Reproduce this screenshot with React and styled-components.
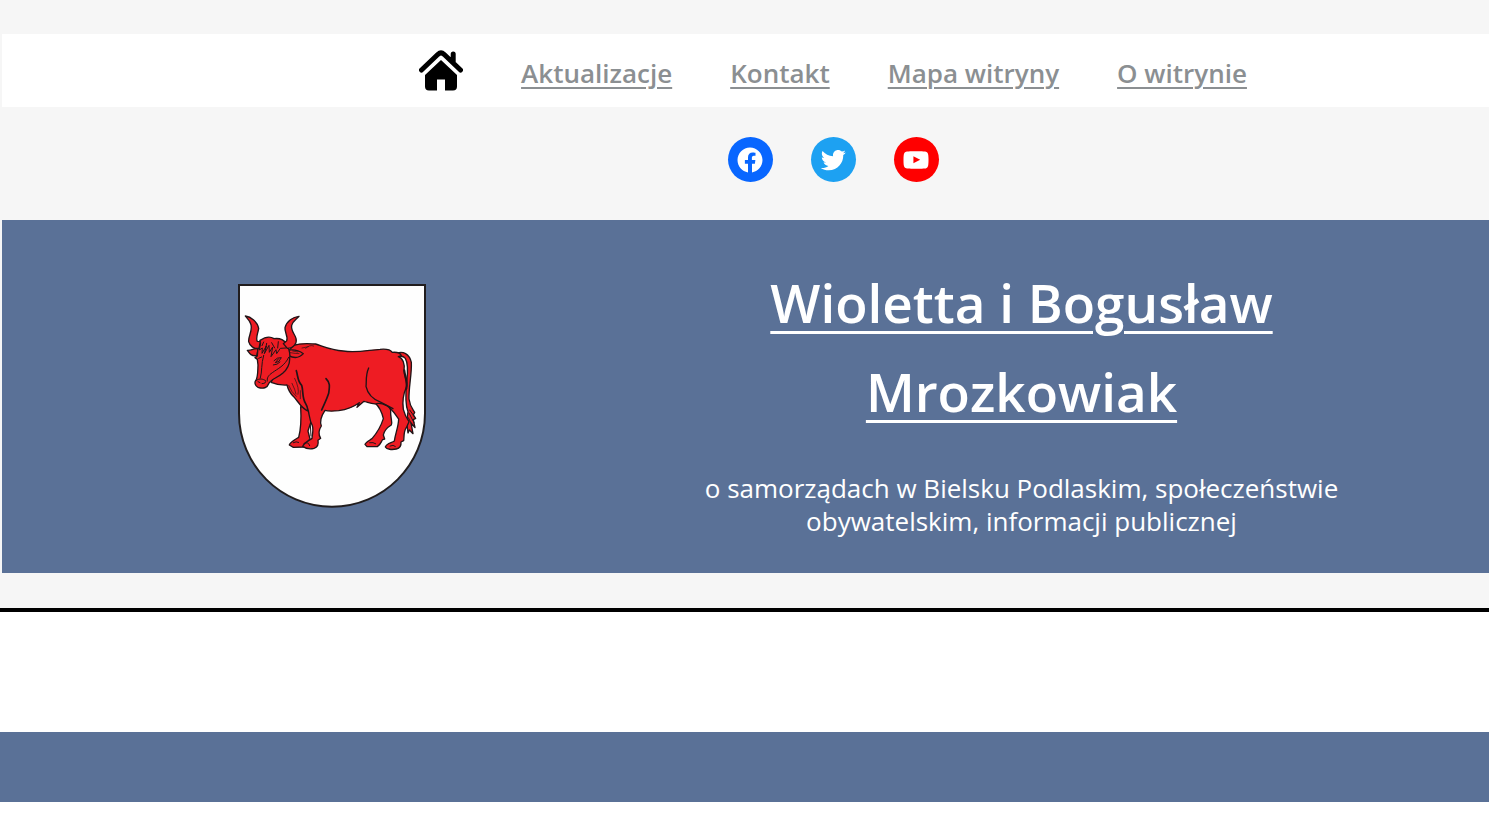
import React from "react";
import styled, { createGlobalStyle } from "styled-components";

const GlobalStyle = createGlobalStyle`
  * { box-sizing: border-box; }
  body {
    margin: 0;
    background: #fff;
    font-family: "Segoe UI", "Open Sans", "Noto Sans", sans-serif;
  }
`;

const Header = styled.header`
  display: flex;
  flex-direction: column;
  padding: 34px 0 35px 2px;
  background: #f6f6f6;
  border-bottom: 4px solid #000;
`;

const Nav = styled.nav`
  display: flex;
  justify-content: center;
  align-items: center;
  gap: 58px;
  min-height: 73px;
  padding-left: 175px;
  background: #fff;
`;

const HomeLink = styled.a`
  display: block;
  width: 44px;
  height: 42px;
  color: #000;
`;

const NavLink = styled.a`
  color: #8b8f92;
  font-size: 26px;
  font-weight: 600;
  line-height: 36px;
  white-space: nowrap;
  text-decoration: underline;
  text-decoration-thickness: 2px;
  text-underline-offset: 4px;
  padding-top: 4px;
`;

const SocialList = styled.ul`
  display: flex;
  justify-content: center;
  gap: 38px;
  margin: 0;
  padding: 30px 0 38px 175px;
  list-style: none;
`;

const SocialLink = styled.a`
  display: flex;
  align-items: center;
  justify-content: center;
  width: 45px;
  height: 45px;
  border-radius: 50%;
  background: ${(p) => p.$color};
  color: #fff;
`;

const Hero = styled.section`
  display: grid;
  grid-template-columns: 660fr 719fr 108fr;
  align-items: center;
  min-height: 353px;
  padding: 32px 0 33px;
  background: #5a7197;
  color: #fff;
`;

const Crest = styled.svg`
  display: block;
  justify-self: center;
  width: 188px;
  height: 224px;
`;

const HeroText = styled.div`
  padding-top: 4px;
  text-align: center;
`;

const Title = styled.h1`
  margin: 0;
  padding: 0 80px;
  font-size: 53px;
  font-weight: 600;
  line-height: 89px;
`;

const TitleLink = styled.a`
  color: inherit;
  text-decoration: underline;
  text-decoration-thickness: 3px;
  text-underline-offset: 8px;
`;

const Tagline = styled.p`
  margin: 36px 0 0;
  padding: 0 32px;
  font-size: 26px;
  line-height: 33px;
`;

const Footer = styled.footer`
  min-height: 70px;
  margin-top: 120px;
  background: #5a7197;
`;

const links = ["Aktualizacje", "Kontakt", "Mapa witryny", "O witrynie"];

const socials = [
  {
    name: "Facebook",
    color: "#0866ff",
    path: "M12 2C6.5 2 2 6.5 2 12c0 5 3.7 9.1 8.4 9.9v-7H7.9V12h2.5V9.8c0-2.5 1.5-3.9 3.8-3.9 1.1 0 2.2.2 2.2.2v2.5h-1.3c-1.2 0-1.6.8-1.6 1.6V12h2.8l-.4 2.9h-2.3v7C18.3 21.1 22 17 22 12c0-5.5-4.5-10-10-10z",
  },
  {
    name: "Twitter",
    color: "#1da1f2",
    path: "M22.23,5.924c-0.736,0.326-1.527,0.547-2.357,0.646c0.847-0.508,1.498-1.312,1.804-2.27c-0.793,0.47-1.671,0.812-2.606,0.996C18.324,4.498,17.257,4,16.077,4c-2.266,0-4.103,1.837-4.103,4.103c0,0.322,0.036,0.635,0.106,0.935C8.67,8.867,5.647,7.234,3.623,4.751C3.27,5.357,3.067,6.062,3.067,6.814c0,1.424,0.724,2.679,1.825,3.415c-0.673-0.021-1.305-0.206-1.859-0.513c0,0.017,0,0.034,0,0.052c0,1.988,1.414,3.647,3.292,4.023c-0.344,0.094-0.707,0.144-1.081,0.144c-0.264,0-0.521-0.026-0.772-0.074c0.522,1.63,2.038,2.816,3.833,2.85c-1.404,1.1-3.174,1.756-5.096,1.756c-0.331,0-0.658-0.019-0.979-0.057c1.816,1.164,3.973,1.843,6.29,1.843c7.547,0,11.675-6.252,11.675-11.675c0-0.178-0.004-0.355-0.012-0.531C20.985,7.47,21.68,6.747,22.23,5.924z",
  },
  {
    name: "YouTube",
    color: "#ff0000",
    path: "M21.8,8.001c0,0-0.195-1.378-0.795-1.985c-0.76-0.797-1.613-0.801-2.004-0.847c-2.799-0.202-6.997-0.202-6.997-0.202h-0.009c0,0-4.198,0-6.997,0.202C4.608,5.216,3.756,5.22,2.995,6.016C2.395,6.623,2.2,8.001,2.2,8.001S2,9.62,2,11.238v1.517c0,1.618,0.2,3.237,0.2,3.237s0.195,1.378,0.795,1.985c0.761,0.797,1.76,0.771,2.205,0.855c1.6,0.153,6.8,0.201,6.8,0.201s4.203-0.006,7.001-0.209c0.391-0.047,1.243-0.051,2.004-0.847c0.6-0.607,0.795-1.985,0.795-1.985s0.2-1.618,0.2-3.237v-1.517C22,9.62,21.8,8.001,21.8,8.001z M9.935,14.594l-0.001-5.62l5.404,2.82L9.935,14.594z",
  },
];

function HomeIcon() {
  return (
    <svg width="44" height="42" viewBox="0 0 44 42" aria-hidden="true">
      <path
        d="M2.5 20 19 4.300Q22 1.600 25 4.300L41.500 20M34.200 12V4"
        fill="none"
        stroke="currentColor"
        strokeWidth="5"
        strokeLinecap="round"
        strokeLinejoin="round"
      />
      <path d="M22 10 38 25V36.500a4 4 0 0 1-4 4H26V29.500H18v11h-8a4 4 0 0 1-4-4V25z" fill="currentColor" />
    </svg>
  );
}

function CoatOfArms() {
  return (
    <Crest viewBox="24 27 564 672" role="img" aria-label="Herb Bielska Podlaskiego">
      <path d="M27 30H585V415C585 570 460 695 306 695S27 570 27 415Z" fill="#fefefe" stroke="#211d1e" strokeWidth="6" />
      <g fill="#ee1c23" stroke="#211417" strokeWidth="4" strokeLinejoin="round" strokeLinecap="round">
        {/* tail */}
        <path d="M502 234C518 228 538 236 544 262C546 295 536 335 537 372C540 395 548 402 554 412L550 420L557 430L550 434L555 458L543 444L549 476L538 465L534 474L530 440L534 410C526 390 527 350 530 320C534 290 533 262 526 250C519 242 510 243 502 246Z" />
        {/* far legs */}
        <path d="M212 395C214 430 212 465 206 487C196 493 180 502 178 510L190 517L222 516L240 492L234 468L243 440L246 402Z" />
        <path d="M435 384C450 397 456 413 460 431C452 457 439 476 426 491C417 497 408 501 405 508L411 515L442 515C453 508 453 500 458 494L464 492L460 480C463 464 474 456 484 450C489 442 480 430 482 405L470 382Z" />
        {/* body with near legs */}
        <path d="M190 211C215 203 235 206 257 207C282 215 305 226 340 228C382 234 416 225 450 223C470 221 482 225 487 232C501 231 512 235 514 242L505 245C519 250 525 267 522 286C523 307 532 321 529 337C520 357 517 382 520 403C524 419 530 430 537 440L529 458C520 470 523 486 521 497L513 501C514 513 509 520 499 522C485 525 470 523 466 516C470 504 485 504 493 498C496 476 505 457 506 432C492 413 482 397 470 392C458 386 448 384 440 386C425 389 413 381 402 379L381 397L388 383C363 401 345 404 326 407C308 409 294 409 285 406C277 418 268 437 274 453C266 465 265 479 272 490L264 496C266 507 262 517 252 520C240 523 225 519 218 514C223 503 236 497 246 490C247 478 251 464 247 452C238 435 238 419 235 408C215 402 205 380 191 365C179 354 174 342 171 330C150 331 135 327 123 322L170 235Z" />
        {/* head and ears */}
        <path d="M176 225C193 223 207 226 220 236C208 249 191 250 176 242Z" />
        <path d="M85 220C72 219 65 227 52 226C59 236 64 244 80 242Z" />
        <path d="M90 196C108 184 123 185 132 191C147 189 160 193 168 204C176 219 182 232 179 249C180 270 170 284 158 295C143 308 120 314 116 326C112 338 100 343 84 337C75 333 73 322 77 317C84 309 83 292 84 270L82 253L75 248L82 243L84 215Z" />
        {/* horns */}
        <path d="M46 123C63 125 82 140 86 160C84 175 76 190 82 199L91 200L87 220C71 223 59 212 56 200C54 184 70 165 62 146C58 134 50 130 46 123Z" />
        <path d="M207 124C189 126 170 138 165 158C163 173 176 186 170 197L160 206L172 220C191 220 202 204 198 190C194 176 182 167 185 151C188 139 198 134 207 124Z" />
      </g>
      <g fill="none" stroke="#211417" strokeWidth="4" strokeLinecap="round" strokeLinejoin="round">
        {/* forelock and face */}
        <path d="M92 204L88 225L97 219L96 235L109 213L103 236L117 211L118 232L128 216L123 245L138 224L140 236L151 220L168 219M101 201L96 212M125 203L134 219M145 200L143 219M110 205L106 225" strokeWidth="3" />
        <path d="M132 257Q142 246 154 248Q148 263 136 263L145 252M130 270Q142 270 150 261M176 247C165 272 142 282 127 293C115 301 110 309 112 318M101 241C93 268 97 289 91 309M86 250L95 246M77 317C91 308 98 313 106 316Q111 325 96 326M84 320L90 323" strokeWidth="3" />
        <path d="M181 233Q197 236 207 236M188 228L203 231" strokeWidth="2" />
        {/* neck and shoulder */}
        <path d="M199 287C205 307 202 318 215 331C221 350 215 366 227 386Q232 394 234 406" strokeWidth="5" />
        <path d="M288 311C301 324 299 333 296 355C290 374 282 389 275 405" strokeWidth="5" />
        <path d="M176 331Q184 352 199 364M186 325Q196 345 198 357M194 310Q209 341 204 358M211 347L211 371M227 220Q239 208 251 213M216 219L235 215" strokeWidth="2" />
        {/* hind quarter */}
        <path d="M416 279C406 301 410 320 408 334C413 358 426 372 453 382L489 401" />
        <path d="M523 286C525 307 535 320 529 341" strokeWidth="6" />
        {/* hooves */}
        <path d="M190 503Q199 498 206 502M222 505Q236 499 239 512M419 503Q430 501 437 506M480 513Q490 508 496 514M241 449L243 483M537 414L552 443M539 405L552 423M535 428L547 452" strokeWidth="3" />
      </g>
    </Crest>
  );
}

export default function App() {
  return (
    <>
      <GlobalStyle />
      <Header>
        <Nav aria-label="Menu">
          <HomeLink href="#" aria-label="Strona główna">
            <HomeIcon />
          </HomeLink>
          {links.map((label) => (
            <NavLink key={label} href="#">{label}</NavLink>
          ))}
        </Nav>
        <SocialList>
          {socials.map((s) => (
            <li key={s.name}>
              <SocialLink href="#" $color={s.color} aria-label={s.name}>
                <svg width="30" height="30" viewBox="0 0 24 24" fill="currentColor" aria-hidden="true">
                  <path d={s.path} />
                </svg>
              </SocialLink>
            </li>
          ))}
        </SocialList>
        <Hero>
          <CoatOfArms />
          <HeroText>
            <Title>
              <TitleLink href="#">Wioletta i Bogusław Mrozkowiak</TitleLink>
            </Title>
            <Tagline>o samorządach w Bielsku Podlaskim, społeczeństwie obywatelskim, informacji publicznej</Tagline>
          </HeroText>
        </Hero>
      </Header>
      <Footer />
    </>
  );
}
